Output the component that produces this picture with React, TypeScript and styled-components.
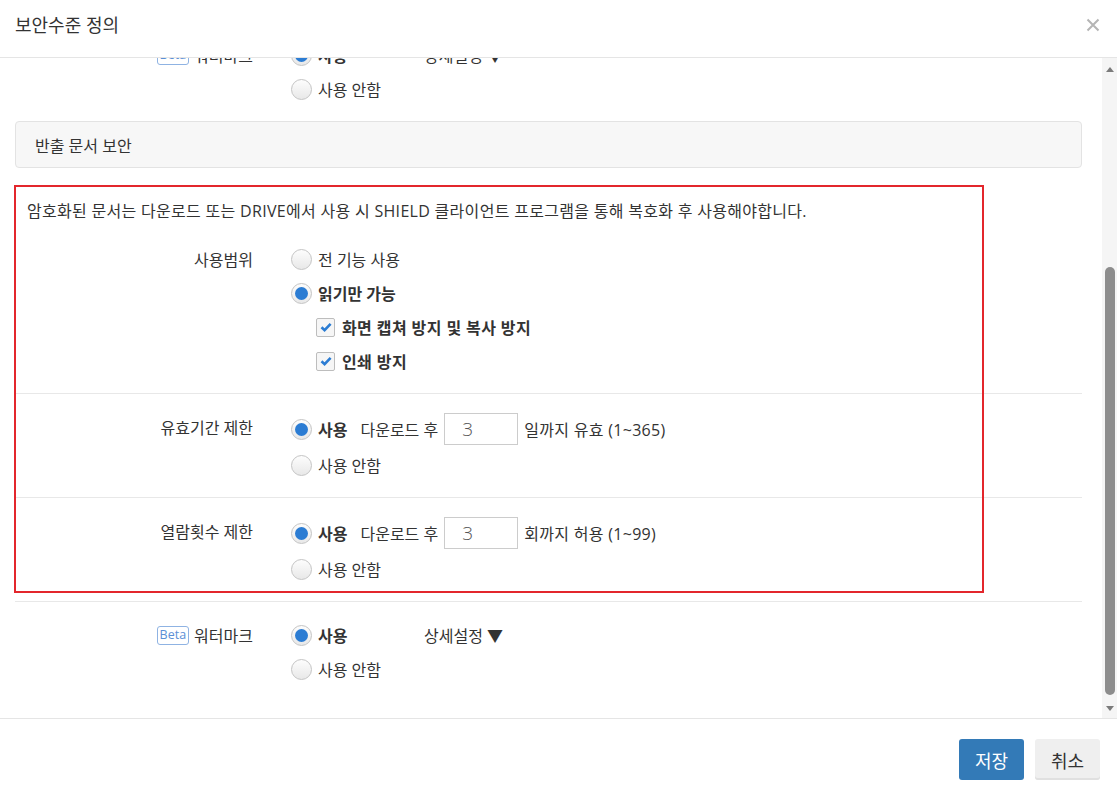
import { useLayoutEffect, useRef } from 'react';
import styled, { createGlobalStyle } from 'styled-components';

const GlobalStyle = createGlobalStyle`
  html, body {
    margin: 0;
    padding: 0;
    height: 100%;
  }
  body {
    font-family: 'Open Sans', 'Noto Sans CJK KR', sans-serif;
    color: #333;
    background: #fff;
  }
  #root {
    height: 100%;
  }
`;

const Modal = styled.div`
  display: flex;
  flex-direction: column;
  height: 100vh;
  box-sizing: border-box;
`;

const Header = styled.header`
  display: flex;
  justify-content: space-between;
  align-items: flex-start;
  height: 58px;
  padding: 14px 17px 0 15px;
  box-sizing: border-box;
  border-bottom: 1px solid #e5e5e5;
  flex: none;
`;

const Title = styled.h4`
  margin: 0;
  font-size: 18px;
  font-weight: 400;
  line-height: 22px;
  color: #333;
`;

const Close = styled.button`
  border: 0;
  background: none;
  padding: 0;
  margin-top: 4px;
  width: 14px;
  height: 14px;
  cursor: pointer;
`;

const Middle = styled.div`
  flex: 1;
  min-height: 0;
  display: flex;
`;

const Body = styled.div`
  flex: 1;
  overflow: hidden;
`;

const ScrollBar = styled.div`
  flex: none;
  width: 15px;
  display: flex;
  flex-direction: column;
  background: #f5f5f5;
`;

const Arrow = styled.div<{ $h: number }>`
  flex: none;
  height: ${({ $h }) => $h}px;
  display: flex;
  align-items: center;
  justify-content: center;
`;

const Rail = styled.div`
  flex: 1;
  display: flex;
  flex-direction: column;
  justify-content: flex-end;
  padding: 0 2px 3px 3px;
`;

const Thumb = styled.div`
  border-radius: 5px;
  background: #8d8d8d;
`;

const Content = styled.div`
  padding: 27px 20px 17px 15px;
`;

const SectionHeader = styled.div`
  height: 47px;
  box-sizing: border-box;
  display: flex;
  align-items: center;
  padding: 0 19px;
  background: #f7f7f7;
  border: 1px solid #e3e3e3;
  border-radius: 4px;
  font-size: 16px;
`;

const Group = styled.div`
  position: relative;
`;

const Highlight = styled.div`
  position: absolute;
  top: 17px;
  left: -1px;
  width: 970px;
  height: 408px;
  box-sizing: border-box;
  border: 2px solid #e3262c;
  pointer-events: none;
`;

const Notice = styled.p`
  margin: 0;
  padding: 32px 12px 4px;
  font-size: 16px;
  line-height: 22px;
  letter-spacing: 0.3px;
`;

const Row = styled.div<{ $last?: boolean }>`
  display: grid;
  grid-template-columns: 276px 1fr;
  padding: 17px 0 16px;
  border-bottom: ${({ $last }) => ($last ? 'none' : '1px solid #e8e8e8')};
`;

const Label = styled.div`
  display: flex;
  justify-content: flex-end;
  align-items: center;
  gap: 5px;
  height: 32px;
  padding-right: 38px;
  font-size: 16px;
`;

const Beta = styled.span`
  display: inline-flex;
  align-items: center;
  height: 17px;
  padding: 0 2px;
  border: 1px solid #8fb3e3;
  border-radius: 3px;
  font-size: 12.5px;
  color: #5b8fd6;
  line-height: 1;
`;

const Options = styled.div`
  display: flex;
  flex-direction: column;
  gap: 2px;
`;

const Line = styled.div<{ $indent?: boolean }>`
  display: flex;
  align-items: center;
  min-height: 32px;
  padding-left: ${({ $indent }) => ($indent ? '25px' : '0')};
  font-size: 16px;
`;

const Choice = styled.label<{ $width?: number }>`
  display: inline-flex;
  align-items: center;
  min-width: ${({ $width }) => ($width ? `${$width}px` : 'auto')};
`;

const RadioDot = styled.span<{ $on?: boolean }>`
  position: relative;
  flex: none;
  width: 21px;
  height: 21px;
  box-sizing: border-box;
  margin-right: 6px;
  border-radius: 50%;
  border: 1px solid #c4c4c4;
  background: linear-gradient(#fdfdfd, #e8e8e8);

  &::after {
    content: '';
    display: ${({ $on }) => ($on ? 'block' : 'none')};
    position: absolute;
    inset: 3px;
    border-radius: 50%;
    background: #2b7cd3;
  }
`;

const CheckBox = styled.span`
  flex: none;
  display: inline-flex;
  align-items: center;
  justify-content: center;
  width: 19px;
  height: 19px;
  box-sizing: border-box;
  margin-right: 7px;
  border: 1px solid #bdbdbd;
  border-radius: 2px;
  background: #f6f6f6;
`;

const Text = styled.span<{ $bold?: boolean; $wide?: boolean }>`
  font-weight: ${({ $bold }) => ($bold ? 700 : 400)};
  letter-spacing: ${({ $wide }) => ($wide ? '0.4px' : 'normal')};
`;

const Pre = styled.span`
  margin-left: 13px;
`;

const NumInput = styled.input`
  width: 74px;
  height: 32px;
  box-sizing: border-box;
  margin: 2px 6px 2px 6px;
  padding: 0 17px;
  border: 1px solid #ccc;
  font-family: 'Open Sans', sans-serif;
  font-size: 19px;
  font-weight: 300;
  color: #555;
  outline: none;
`;

const Suffix = styled.span`
  letter-spacing: 0.3px;
`;

const Detail = styled.span`
  font-size: 16px;
`;

const Footer = styled.footer`
  flex: none;
  display: flex;
  justify-content: flex-end;
  gap: 11px;
  padding: 20px 17px 17px;
  border-top: 1px solid #e5e5e5;
`;

const Button = styled.button<{ $primary?: boolean }>`
  width: 65px;
  height: 41px;
  border: 0;
  border-radius: 3px;
  font-family: 'Open Sans', 'Noto Sans CJK KR', sans-serif;
  font-size: 18px;
  cursor: pointer;
  background: ${({ $primary }) => ($primary ? '#337ab7' : '#efefef')};
  color: ${({ $primary }) => ($primary ? '#fff' : '#333')};
  box-shadow: ${({ $primary }) => ($primary ? 'none' : 'inset 0 -2px 0 #e0e0e0')};
`;

const Radio = ({ on, label, bold, width }: { on?: boolean; label: string; bold?: boolean; width?: number }) => (
  <Choice $width={width}>
    <RadioDot $on={on} />
    <Text $bold={bold}>{label}</Text>
  </Choice>
);

const Check = ({ label }: { label: string }) => (
  <Line $indent>
    <CheckBox>
      <svg width='14' height='14' viewBox='0 0 14 14'>
        <path d='M2.5 7.2 L5.6 10.2 L11.6 3.8' fill='none' stroke='#2b7cd3' strokeWidth='2.6' />
      </svg>
    </CheckBox>
    <Text $bold $wide>
      {label}
    </Text>
  </Line>
);

const OnOff = ({ label, beta, last }: { label: string; beta?: boolean; last?: boolean }) => (
  <Row $last={last}>
    <Label>
      {beta && <Beta>Beta</Beta>}
      {label}
    </Label>
    <Options>
      <Line>
        <Radio on label='사용' bold width={beta ? 133 : undefined} />
        {beta && <Detail>상세설정 ▼</Detail>}
      </Line>
      <Line>
        <Radio label='사용 안함' />
      </Line>
    </Options>
  </Row>
);

const Limit = ({ label, suffix }: { label: string; suffix: string }) => (
  <Row>
    <Label>{label}</Label>
    <Options>
      <Line>
        <Radio on label='사용' bold />
        <Pre>다운로드 후</Pre>
        <NumInput defaultValue='3' readOnly />
        <Suffix>{suffix}</Suffix>
      </Line>
      <Line>
        <Radio label='사용 안함' />
      </Line>
    </Options>
  </Row>
);

const App = () => {
  const bodyRef = useRef<HTMLDivElement>(null);

  useLayoutEffect(() => {
    if (bodyRef.current) bodyRef.current.scrollTop = bodyRef.current.scrollHeight;
  }, []);

  return (
    <Modal>
      <GlobalStyle />
      <Header>
        <Title>보안수준 정의</Title>
        <Close aria-label='닫기'>
          <svg width='14' height='14' viewBox='0 0 14 14'>
            <path d='M1.5 1.5 L12.5 12.5 M12.5 1.5 L1.5 12.5' stroke='#b5b5b5' strokeWidth='2' />
          </svg>
        </Close>
      </Header>

      <Middle>
        <Body ref={bodyRef}>
          <Content>
            <SectionHeader>문서 보안</SectionHeader>
            <OnOff label='문서 암호화' />
            <OnOff label='워터마크' beta last />

            <SectionHeader>반출 문서 보안</SectionHeader>
            <Group>
              <Notice>
                암호화된 문서는 다운로드 또는 DRIVE에서 사용 시 SHIELD 클라이언트 프로그램을 통해 복호화 후
                사용해야합니다.
              </Notice>
              <Row>
                <Label>사용범위</Label>
                <Options>
                  <Line>
                    <Radio label='전 기능 사용' />
                  </Line>
                  <Line>
                    <Radio on label='읽기만 가능' bold />
                  </Line>
                  <Check label='화면 캡쳐 방지 및 복사 방지' />
                  <Check label='인쇄 방지' />
                </Options>
              </Row>
              <Limit label='유효기간 제한' suffix='일까지 유효 (1~365)' />
              <Limit label='열람횟수 제한' suffix='회까지 허용 (1~99)' />
              <Highlight />
            </Group>
            <OnOff label='워터마크' beta last />
          </Content>
        </Body>
        <ScrollBar>
          <Arrow $h={22}>
            <svg width='8' height='5' viewBox='0 0 8 5'>
              <path d='M0 5 L4 0 L8 5 Z' fill='#7b7b7b' />
            </svg>
          </Arrow>
          <Rail>
            <Thumb style={{ height: 428 }} />
          </Rail>
          <Arrow $h={20}>
            <svg width='8' height='5' viewBox='0 0 8 5'>
              <path d='M0 0 L8 0 L4 5 Z' fill='#7b7b7b' />
            </svg>
          </Arrow>
        </ScrollBar>
      </Middle>

      <Footer>
        <Button $primary>저장</Button>
        <Button>취소</Button>
      </Footer>
    </Modal>
  );
};

export default App;
